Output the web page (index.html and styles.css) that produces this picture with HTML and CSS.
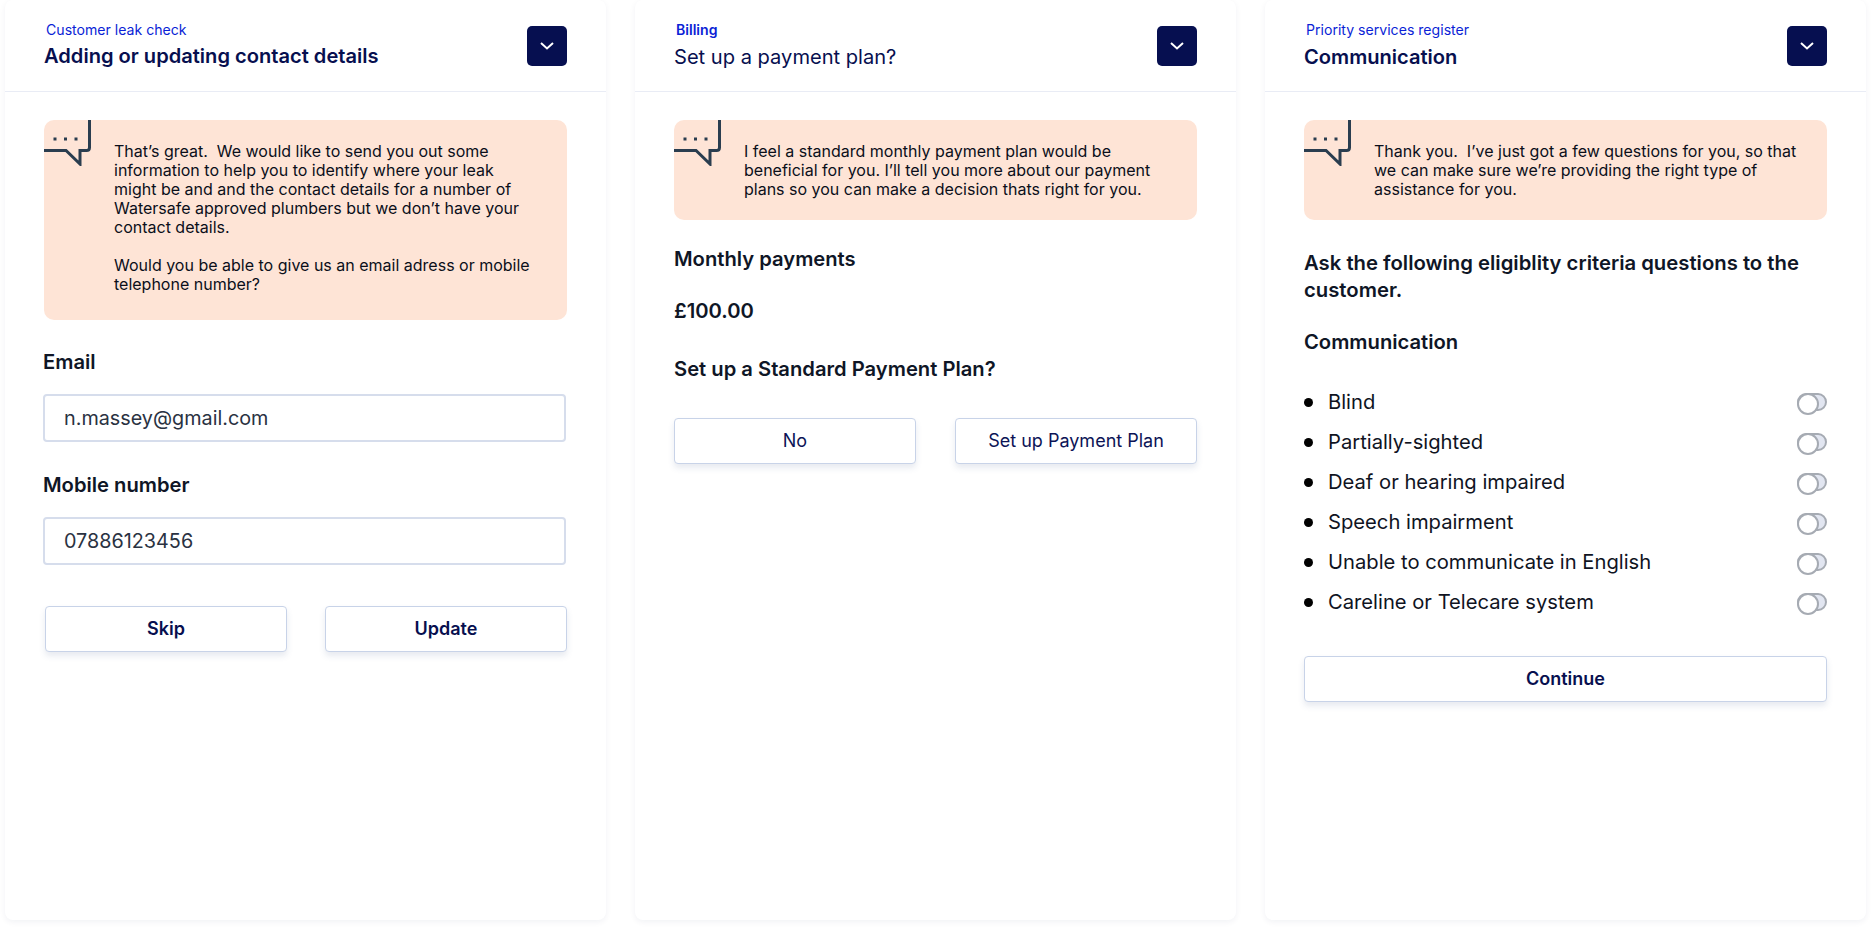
FILE: index.html
```html
<!DOCTYPE html>
<html lang="en">
<head>
<meta charset="utf-8">
<title>Customer journeys</title>
<link rel="stylesheet" href="styles.css">
</head>
<body>
<main class="board">

  <section class="card">
    <header class="card-head">
      <div class="head-text">
        <div class="eyebrow">Customer leak check</div>
        <h2 class="title title-tight">Adding or updating contact details</h2>
      </div>
      <button class="toggle-btn" aria-label="Collapse"><svg width="14" height="8" viewBox="0 0 14 8"><path d="M1 1l6 5.5L13 1" fill="none" stroke="#fff" stroke-width="2"/></svg></button>
    </header>
    <div class="card-body">
      <div class="callout callout-tall">
        <svg class="callout-icon" width="48" height="46" viewBox="0 0 48 46"><path d="M45.5 0V27.5Q45.500 30.500 42.500 30.500H36V44L22 30.500H0" fill="none" stroke="#2a3d4f" stroke-width="3"/><rect x="9.500" y="17.500" width="3" height="3" fill="#2a3d4f"/><rect x="20" y="17.500" width="3" height="3" fill="#2a3d4f"/><rect x="30.500" y="17.500" width="3" height="3" fill="#2a3d4f"/></svg>
        <div class="callout-text">That’s great.&nbsp; We would like to send you out some information to help you to identify where your leak might be and and the contact details for a number of Watersafe approved plumbers but we don’t have your contact details.<br><br>Would you be able to give us an email adress or mobile telephone number?</div>
      </div>
      <div class="label label-email">Email</div>
      <div class="field">n.massey@gmail.com</div>
      <div class="label label-mobile">Mobile number</div>
      <div class="field">07886123456</div>
      <div class="actions actions-form">
        <button class="btn btn-strong">Skip</button>
        <button class="btn btn-strong">Update</button>
      </div>
    </div>
  </section>

  <section class="card">
    <header class="card-head">
      <div class="head-text">
        <div class="eyebrow eyebrow-medium">Billing</div>
        <h2 class="title title-light">Set up a payment plan?</h2>
      </div>
      <button class="toggle-btn" aria-label="Collapse"><svg width="14" height="8" viewBox="0 0 14 8"><path d="M1 1l6 5.5L13 1" fill="none" stroke="#fff" stroke-width="2"/></svg></button>
    </header>
    <div class="card-body">
      <div class="callout">
        <svg class="callout-icon" width="48" height="46" viewBox="0 0 48 46"><path d="M45.5 0V27.5Q45.500 30.500 42.500 30.500H36V44L22 30.500H0" fill="none" stroke="#2a3d4f" stroke-width="3"/><rect x="9.500" y="17.500" width="3" height="3" fill="#2a3d4f"/><rect x="20" y="17.500" width="3" height="3" fill="#2a3d4f"/><rect x="30.500" y="17.500" width="3" height="3" fill="#2a3d4f"/></svg>
        <div class="callout-text">I feel a standard monthly payment plan would be beneficial for you. I’ll tell you more about our payment plans so you can make a decision thats right for you.</div>
      </div>
      <div class="label label-monthly">Monthly payments</div>
      <div class="label label-amount">£100.00</div>
      <div class="label label-plan">Set up a Standard Payment Plan?</div>
      <div class="actions actions-plan">
        <button class="btn">No</button>
        <button class="btn">Set up Payment Plan</button>
      </div>
    </div>
  </section>

  <section class="card">
    <header class="card-head">
      <div class="head-text">
        <div class="eyebrow">Priority services register</div>
        <h2 class="title">Communication</h2>
      </div>
      <button class="toggle-btn" aria-label="Collapse"><svg width="14" height="8" viewBox="0 0 14 8"><path d="M1 1l6 5.5L13 1" fill="none" stroke="#fff" stroke-width="2"/></svg></button>
    </header>
    <div class="card-body">
      <div class="callout">
        <svg class="callout-icon" width="48" height="46" viewBox="0 0 48 46"><path d="M45.5 0V27.5Q45.500 30.500 42.500 30.500H36V44L22 30.500H0" fill="none" stroke="#2a3d4f" stroke-width="3"/><rect x="9.500" y="17.500" width="3" height="3" fill="#2a3d4f"/><rect x="20" y="17.500" width="3" height="3" fill="#2a3d4f"/><rect x="30.500" y="17.500" width="3" height="3" fill="#2a3d4f"/></svg>
        <div class="callout-text">Thank you.&nbsp; I’ve just got a few questions for you, so that we can make sure we’re providing the right type of assistance for you.</div>
      </div>
      <div class="lead">Ask the following eligiblity criteria questions to the customer.</div>
      <div class="label label-comm">Communication</div>
      <ul class="checks">
        <li class="check"><span class="check-name">Blind</span><span class="switch"></span></li>
        <li class="check"><span class="check-name">Partially-sighted</span><span class="switch"></span></li>
        <li class="check"><span class="check-name">Deaf or hearing impaired</span><span class="switch"></span></li>
        <li class="check"><span class="check-name">Speech impairment</span><span class="switch"></span></li>
        <li class="check"><span class="check-name">Unable to communicate in English</span><span class="switch"></span></li>
        <li class="check"><span class="check-name">Careline or Telecare system</span><span class="switch"></span></li>
      </ul>
      <div class="actions actions-single">
        <button class="btn btn-strong">Continue</button>
      </div>
    </div>
  </section>

</main>
</body>
</html>
```

FILE: styles.css
```css
* { box-sizing: border-box; }
html, body { margin: 0; background: #fff; }
body {
  font-family: Inter, "Liberation Sans", sans-serif;
  color: #0f1626;
  height: 928px;
  overflow: hidden;
}
.board {
  display: flex;
  gap: 28px;
  padding-left: 5px;
}
.card {
  width: 601px;
  height: 920px;
  margin-right: 1px;
  background: #fff;
  border-radius: 8px;
  box-shadow: 0 2px 6px rgba(20, 30, 80, 0.06);
}
.card-head {
  height: 92px;
  padding: 0 39px 0 39px;
  display: flex;
  justify-content: space-between;
  align-items: flex-start;
  border-bottom: 1px solid #e9ecf5;
}
.head-text { padding-top: 21px; }
.eyebrow {
  font-size: 14.1px;
  line-height: 18px;
  color: #0b1fd6;
  margin-left: 2px;
}
.eyebrow-medium { font-weight: 600; }
.title {
  margin: 4px 0 0;
  font-size: 20.1px;
  line-height: 28px;
  font-weight: 600;
  color: #070f4f;
}
.title-tight { margin-top: 3px; }
.title-light { font-weight: 400; }
.toggle-btn {
  width: 40px;
  height: 40px;
  margin-top: 26px;
  padding: 0;
  border: 0;
  border-radius: 5px;
  background: #060f50;
  display: flex;
  align-items: center;
  justify-content: center;
}
.card-body { padding: 28px 39px 0 39px; }
.callout {
  background: #fee4d6;
  border-radius: 10px;
  display: flex;
  gap: 22px;
  padding: 0 28px 21px 0;
  height: 100px;
}
.callout-tall { height: 200px; }
.callout-icon { flex: none; display: block; }
.callout-text {
  padding-top: 22px;
  font-size: 16px;
  line-height: 19px;
  color: #0b0f1a;
}
.label {
  font-size: 20.2px;
  line-height: 24px;
  font-weight: 600;
}
.label-email { margin: 30px 0 0 -1px; }
.label-mobile { margin: 31px 0 0 -1px; }
.label-monthly { margin-top: 27px; }
.label-amount { margin-top: 28px; }
.label-plan { margin-top: 34px; }
.label-comm { margin-top: 27px; }
.field {
  width: 523px;
  height: 48px;
  margin: 20px 0 0 -1px;
  padding-left: 19px;
  border: 2px solid #d6ddec;
  border-radius: 4px;
  font-size: 19.8px;
  line-height: 44px;
  color: #2a3242;
}
.actions { display: flex; gap: 39px; }
.actions-form { margin: 41px 0 0 1px; gap: 38px; }
.actions-plan { margin-top: 37px; }
.actions-single { margin-top: 34px; }
.btn {
  flex: 1;
  height: 46px;
  padding: 0 0 2px;
  background: #fff;
  border: 1.5px solid #c8d3e8;
  border-radius: 4px;
  box-shadow: 0 4px 6px rgba(60, 80, 130, 0.12);
  font-family: inherit;
  font-size: 18px;
  font-weight: 400;
  color: #0c1456;
}
.btn-strong { font-weight: 600; color: #070f4f; }
.lead {
  margin-top: 29px;
  font-size: 20.3px;
  line-height: 27px;
  font-weight: 600;
}
.checks { list-style: none; margin: 28px 0 0; padding: 0; }
.check {
  height: 40px;
  display: flex;
  align-items: center;
  font-size: 20.2px;
  color: #10141f;
}
.check::before {
  content: "";
  flex: none;
  width: 9px;
  height: 9px;
  margin-right: 15px;
  border-radius: 50%;
  background: #000;
}
.check-name { flex: 1; padding-bottom: 2px; }
.switch {
  flex: none;
  position: relative;
  width: 30px;
  height: 18px;
  border: 2px solid #a6abb3;
  border-radius: 9px;
  background: #e2e6f1;
}
.switch::before {
  content: "";
  position: absolute;
  left: -2px;
  top: -2px;
  width: 18px;
  height: 18px;
  border: 2px solid #a6abb3;
  border-radius: 50%;
  background: #fff;
}
```
